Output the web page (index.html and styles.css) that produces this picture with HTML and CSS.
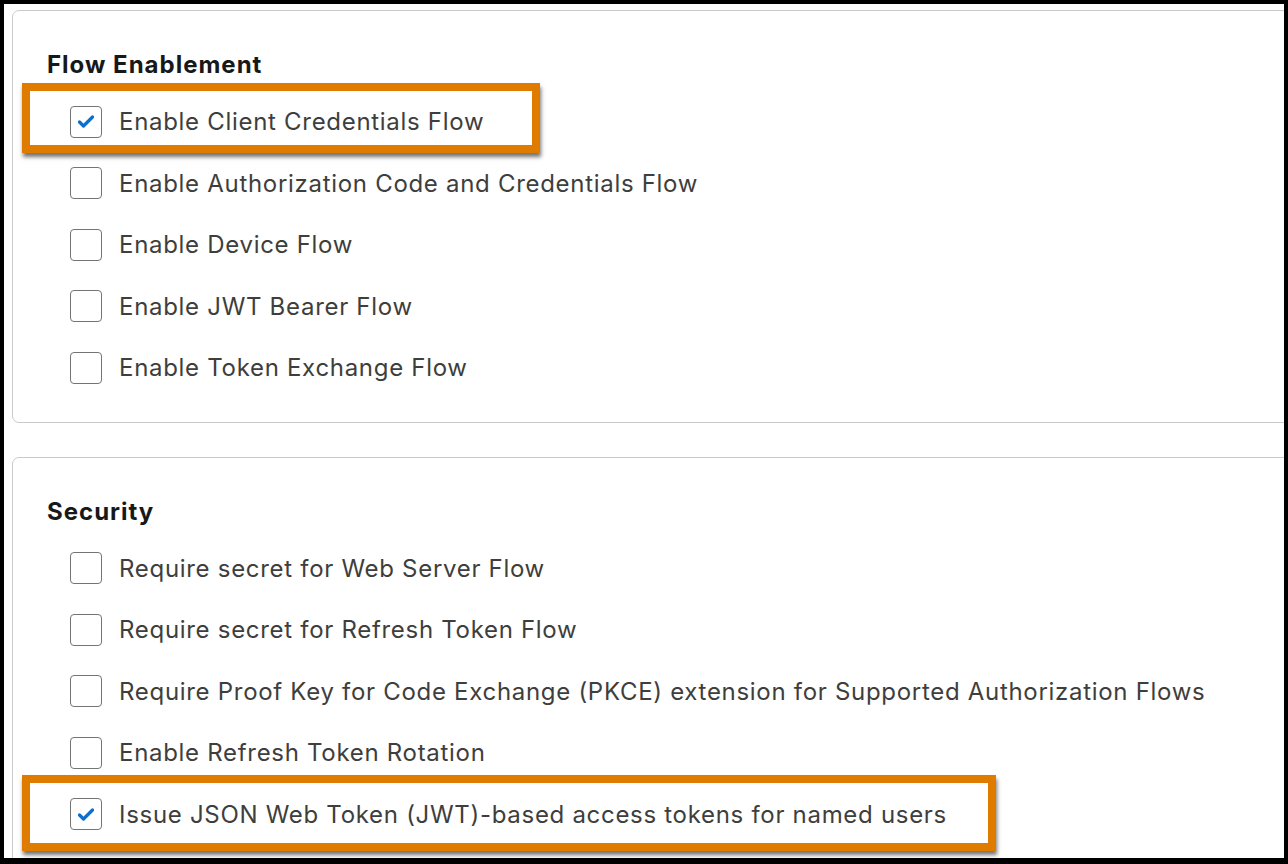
FILE: index.html
```html
<!DOCTYPE html>
<html lang="en">
<head>
<meta charset="utf-8">
<title>Connected App Settings</title>
<link rel="stylesheet" href="styles.css">
</head>
<body>
<div class="frame">
  <section class="card">
    <h2 class="card-title">Flow Enablement</h2>
    <ul class="options">
      <li class="option">
        <span class="highlight hl-1"></span>
        <span class="checkbox checked"><svg viewBox="0 0 16 13" class="tick"><path d="M1.5 7 L5.5 11 L14.5 2" /></svg></span>
        <span class="label">Enable Client Credentials Flow</span>
      </li>
      <li class="option"><span class="checkbox"></span><span class="label">Enable Authorization Code and Credentials Flow</span></li>
      <li class="option"><span class="checkbox"></span><span class="label">Enable Device Flow</span></li>
      <li class="option"><span class="checkbox"></span><span class="label">Enable JWT Bearer Flow</span></li>
      <li class="option"><span class="checkbox"></span><span class="label">Enable Token Exchange Flow</span></li>
    </ul>
  </section>
  <section class="card card-security">
    <h2 class="card-title">Security</h2>
    <ul class="options">
      <li class="option"><span class="checkbox"></span><span class="label">Require secret for Web Server Flow</span></li>
      <li class="option"><span class="checkbox"></span><span class="label">Require secret for Refresh Token Flow</span></li>
      <li class="option"><span class="checkbox"></span><span class="label">Require Proof Key for Code Exchange (PKCE) extension for Supported Authorization Flows</span></li>
      <li class="option"><span class="checkbox"></span><span class="label">Enable Refresh Token Rotation</span></li>
      <li class="option">
        <span class="highlight hl-2"></span>
        <span class="checkbox checked"><svg viewBox="0 0 16 13" class="tick"><path d="M1.5 7 L5.5 11 L14.5 2" /></svg></span>
        <span class="label">Issue JSON Web Token (JWT)-based access tokens for named users</span>
      </li>
    </ul>
  </section>
</div>
</body>
</html>
```

FILE: styles.css
```css
* { box-sizing: border-box; }

html, body {
  margin: 0;
  padding: 0;
  background: #000;
}

body {
  width: 1288px;
  height: 864px;
  padding: 4px 4px 6px 4px;
  font-family: Inter, "Liberation Sans", Arial, sans-serif;
}

.frame {
  background: #fff;
  height: 854px;
  overflow: hidden;
  padding: 6px 0 0 8px;
  display: flex;
  flex-direction: column;
  gap: 34px;
}

.card {
  width: 1300px;
  border: 1.5px solid #cacaca;
  border-radius: 7px;
  padding: 38px 0 23px 34px;
  flex-shrink: 0;
}

.card-title {
  margin: 0;
  font-size: 24px;
  line-height: 32px;
  font-weight: 700;
  color: #181818;
  letter-spacing: 1px;
}

.options {
  list-style: none;
  margin: 10px 0 0 0;
  padding: 0 0 0 23px;
}

.option {
  position: relative;
  height: 61.5px;
  display: flex;
  align-items: center;
  gap: 17px;
}

.checkbox {
  width: 32px;
  height: 32px;
  border: 1.5px solid #747474;
  border-radius: 4px;
  background: #fff;
  display: flex;
  align-items: center;
  justify-content: center;
  flex-shrink: 0;
  position: relative;
}

.tick {
  width: 16px;
  height: 13px;
  fill: none;
  stroke: #0b6fd0;
  stroke-width: 3.2;
  stroke-linecap: round;
  stroke-linejoin: round;
}

.label {
  font-size: 24px;
  color: #3e3e3c;
  letter-spacing: 0.7px;
  white-space: nowrap;
  position: relative;
}

.highlight {
  position: absolute;
  border: 8px solid #df7c00;
  box-shadow: 1px 4px 4px rgba(0, 0, 0, 0.55);
  background: #fff;
}

.hl-1 {
  left: -48px;
  top: -8px;
  width: 518px;
  height: 70px;
}

.hl-2 {
  left: -48px;
  top: -9px;
  width: 974px;
  height: 76px;
}
```
